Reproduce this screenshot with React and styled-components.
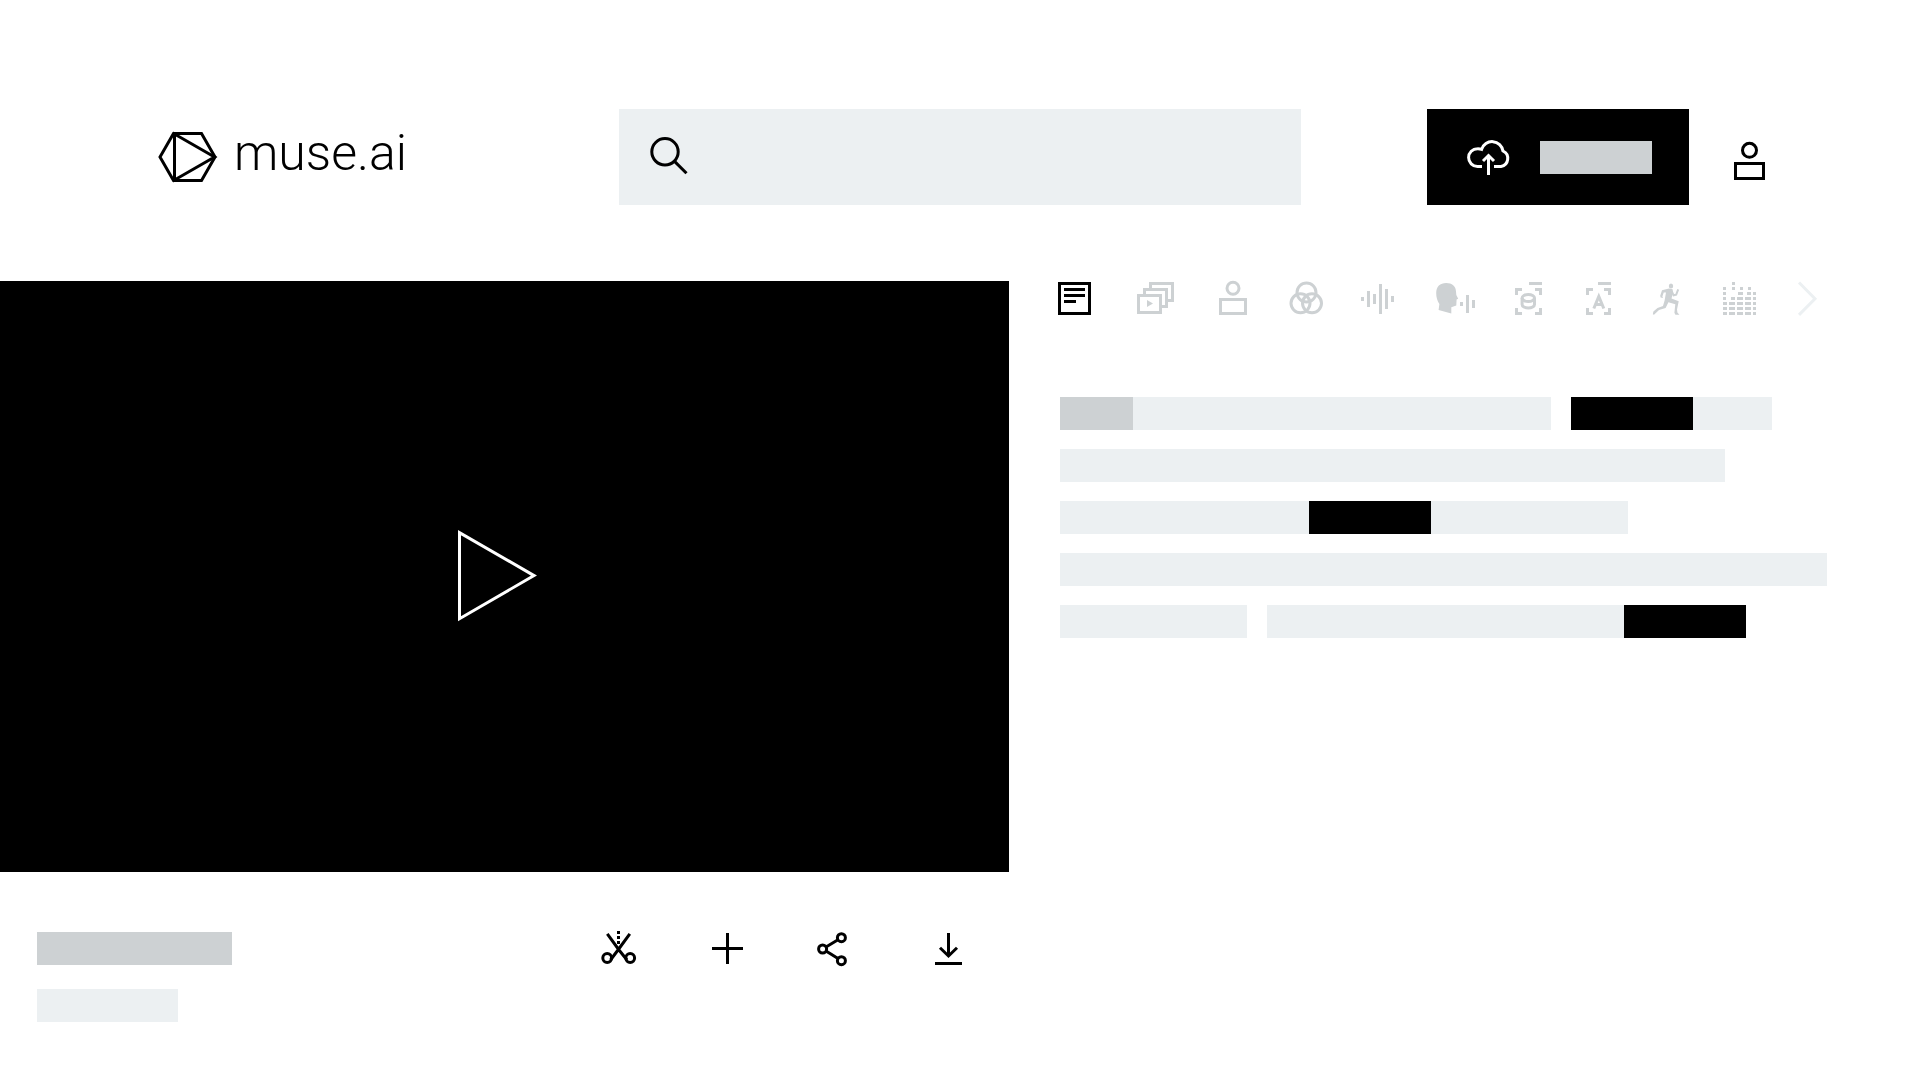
import React from "react";
import styled, { createGlobalStyle } from "styled-components";

const INK = "#000000";
const MID = "#cdd1d3";
const PALE = "#ecf0f2";

const GlobalStyle = createGlobalStyle`
  *, *::before, *::after { box-sizing: border-box; }
  body {
    margin: 0;
    background: #fff;
    color: ${INK};
    font-family: Roboto, "Liberation Sans", sans-serif;
  }
`;

const Page = styled.div`
  min-height: 100vh;
`;

const Header = styled.header`
  display: grid;
  grid-template-columns: 461fr 682fr 464fr;
  align-items: center;
  padding: 109px 155px 76px 158px;
`;

const Brand = styled.a`
  display: flex;
  align-items: center;
  gap: 16px;
  color: ${INK};
  text-decoration: none;
`;

const BrandName = styled.span`
  padding-bottom: 8px;
  font-size: 50px;
  line-height: 56px;
  font-weight: 300;
`;

const Search = styled.label`
  display: flex;
  align-items: center;
  gap: 24px;
  height: 96px;
  padding: 0 31px;
  background: ${PALE};
`;

const SearchInput = styled.input`
  flex: 1;
  min-width: 0;
  height: 48px;
  border: 0;
  padding: 0;
  outline: none;
  background: transparent;
  font: inherit;
  font-size: 24px;
`;

const Account = styled.div`
  display: flex;
  align-items: center;
  justify-content: flex-end;
  gap: 45px;
`;

const UploadButton = styled.button`
  display: flex;
  align-items: center;
  gap: 29px;
  height: 96px;
  padding: 0 37px 0 40px;
  border: 0;
  background: ${INK};
  color: #fff;
  cursor: pointer;
`;

const IconButton = styled.button`
  display: block;
  flex: none;
  padding: 0;
  border: 0;
  background: none;
  color: ${(p) => p.$color || INK};
  cursor: pointer;
`;

const Drawing = styled.svg`
  display: block;
  flex: none;
  overflow: visible;
  fill: none;
  stroke: currentColor;
  stroke-width: 3px;

  .solid {
    fill: currentColor;
    stroke: none;
  }
`;

const Bar = styled.span`
  display: block;
  flex: 0 1 auto;
  width: ${(p) => p.$width}px;
  height: 33px;
  background: ${(p) => p.$tone};
`;

const Main = styled.main`
  display: grid;
  grid-template-columns: 1009fr 911fr;
  align-items: start;
`;

const Player = styled.div`
  display: flex;
  align-items: center;
  justify-content: center;
  aspect-ratio: 1009 / 591;
  background: ${INK};
`;

const Details = styled.div`
  display: flex;
  align-items: flex-start;
  justify-content: space-between;
  padding: 60px 34px 56px 37px;
`;

const Caption = styled.div`
  display: flex;
  flex-direction: column;
  gap: 24px;
`;

const Actions = styled.div`
  display: flex;
  gap: 74px;
`;

const Insights = styled.section`
  padding-left: 49px;
`;

const Tabs = styled.nav`
  display: flex;
  justify-content: space-between;
  padding-right: 103px;
`;

const Transcript = styled.div`
  display: flex;
  flex-direction: column;
  gap: 19px;
  padding: 81px 32px 0 2px;
`;

const Line = styled.div`
  display: flex;
  gap: 20px;
`;

const Phrase = styled.div`
  display: flex;
  flex: 0 1 auto;
`;

const Icon = ({ width, height, top = 0, children }) => (
  <Drawing
    width={width}
    height={height}
    viewBox={`0 ${top} ${width} ${height}`}
    aria-hidden="true"
  >
    {children}
  </Drawing>
);

/* Each bar is [x, y, width, height]. */
const Blocks = ({ items }) =>
  items.map(([x, y, w, h]) => (
    <rect key={`${x}-${y}`} className="solid" x={x} y={y} width={w} height={h} />
  ));

const EQ_BLOCKS = [
  [11, 2, 3, 3],
  [2, 7, 3, 3], [11, 7, 3, 3], [19, 7, 3, 3], [27, 7, 3, 3],
  [2, 12, 3, 3], [17, 12, 5, 3], [26, 12, 4, 3], [32, 12, 3, 3],
  [2, 17, 3, 3], [10, 17, 4, 3], [16, 17, 6, 3], [24, 17, 6, 3], [32, 17, 3, 3],
  ...[22, 27, 32].flatMap((y) => [
    [2, y, 4, 3], [8, y, 6, 3], [16, y, 6, 3], [24, y, 6, 3], [32, y, 3, 3],
  ]),
];

const TABS = [
  {
    name: "Transcript", width: 40, color: INK,
    art: (
      <>
        <rect x="1.5" y="3.5" width="30" height="30" />
        <path d="M6 9.5H27M6 15.5H27M6 21.5H18" />
      </>
    ),
  },
  {
    name: "Scenes", width: 44,
    art: (
      <>
        <rect x="2.5" y="15.5" width="22" height="17" />
        <path d="M8.5 14V9.5H30.5V26.5H26M14.5 8V3.5H36.5V20.5H32" />
        <path className="solid" d="M11 20L17 23.5L11 27Z" />
      </>
    ),
  },
  {
    name: "People", width: 33,
    art: (
      <>
        <circle cx="15" cy="8.3" r="6" />
        <rect x="2.5" y="19.5" width="25" height="14" />
      </>
    ),
  },
  {
    name: "Topics", width: 34,
    art: (
      <>
        <circle cx="17.5" cy="12.5" r="9.5" />
        <circle cx="11.5" cy="23.3" r="9.5" />
        <circle cx="23" cy="23.3" r="9.5" />
      </>
    ),
  },
  {
    name: "Sounds", width: 36,
    art: (
      <Blocks
        items={[
          [0, 17, 3, 4], [6, 11, 3, 16], [12, 14, 3, 10],
          [18, 4, 3, 30], [24, 9, 3, 20], [30, 16, 3, 6],
        ]}
      />
    ),
  },
  {
    name: "Speakers", width: 42,
    art: (
      <>
        <path
          className="solid"
          d="M3.6 30L4.4 24C2.4 21 1.2 17.5 1.2 13C1.2 6.5 5 3 11.2 3C17 3 20.8 6 21 11.5L21.3 15L23.2 18.7L21.6 19.6L21.3 25.5L16.3 27.3V33.6Z"
        />
        <Blocks items={[[25, 22, 3, 4], [31, 15, 3, 18], [37, 20, 3, 8]]} />
      </>
    ),
  },
  {
    name: "Objects", width: 30,
    art: (
      <>
        <path d="M1.5 15V9.5H7M20 9.5H25.5V15M1.5 28V33.5H7M20 33.5H25.5V28M14 3.5H27" />
        <ellipse cx="13.3" cy="18" rx="6.2" ry="3.6" />
        <path d="M7.1 18V24.5C7.1 26.5 9.9 28 13.3 28S19.5 26.5 19.5 24.5V18" />
      </>
    ),
  },
  {
    name: "On-screen text", width: 30,
    art: (
      <>
        <path d="M4.5 15V9.5H10M21 9.5H26.5V15M4.5 28V33.5H10M21 33.5H26.5V28M15 3.5H28" />
        <path d="M10.8 28.5L15.8 16.5L20.8 28.5M12 24.5H19.5" />
      </>
    ),
  },
  {
    name: "Actions", width: 32,
    art: (
      <>
        <ellipse className="solid" cx="20" cy="6" rx="2.2" ry="2.5" />
        <path
          className="solid"
          d="M18 8.5L21.6 9.2L22 12.5L20.5 18.5L27.7 21.3L26 29.5L26.4 32.5L28.4 34.8H24.4L23.4 32.8L24.3 24.2L17.4 22.2L14.6 28L8 30L3 34.7L1.8 34.3L2.4 31.5L6.5 28L12 26L13.6 20.5L15 12.5L12.7 12.6L11.4 16.6L12 18L9.6 17.6L9.2 15.8L11 10.2Z"
        />
        <path strokeWidth="2" d="M20.6 11L22.6 15.3L25.2 14.6L27.2 9.3" />
      </>
    ),
  },
  { name: "Activity", width: 38, art: <Blocks items={EQ_BLOCKS} /> },
  {
    name: "More", width: 20, color: PALE,
    art: <path d="M2 2.5L18 18.7L2 34.9" />,
  },
];

const ACTIONS = [
  {
    name: "Clip", width: 37,
    art: (
      <>
        <circle cx="7.2" cy="28" r="4.4" />
        <circle cx="30.2" cy="28" r="4.4" />
        <path d="M7.3 3.8L19 20L27 30M29.8 3.8L18 20L10.5 30" />
        <Blocks items={[[17, 1, 3, 3], [17, 6, 3, 3], [17, 11, 3, 3]]} />
      </>
    ),
  },
  { name: "Add", width: 32, art: <path d="M1 18.5H32M16.5 3V34" /> },
  {
    name: "Share", width: 30,
    art: (
      <>
        <circle cx="24.4" cy="7.7" r="4" />
        <circle cx="5.6" cy="19" r="4" />
        <circle cx="24.4" cy="30.7" r="4" />
        <path d="M9 17L21 9.8M9 21L21 28.6" />
      </>
    ),
  },
  {
    name: "Download", width: 54,
    art: <path d="M27.5 3V26M19 17.7L27.5 26L36 17.7M14 33.5H41" />,
  },
];

/* Lines of the transcript: phrases made of [width, tone] runs. */
const LINES = [
  [[[73, MID], [418, PALE]], [[122, INK], [79, PALE]]],
  [[[665, PALE]]],
  [[[249, PALE], [122, INK], [197, PALE]]],
  [[[767, PALE]]],
  [[[187, PALE]], [[357, PALE], [122, INK]]],
];

export default function App() {
  return (
    <Page>
      <GlobalStyle />
      <Header>
        <Brand href="#home">
          <Icon width={60} height={51}>
            <path d="M15.5 1.5H43.5L57 25L43.5 48.5H15.5L2 25Z" />
            <path d="M16.5 2V48L56.5 25Z" />
          </Icon>
          <BrandName>muse.ai</BrandName>
        </Brand>
        <Search>
          <Icon width={38} height={42}>
            <circle cx="15" cy="15.8" r="13.2" />
            <path d="M24.3 25.1L36.5 37.3" />
          </Icon>
          <SearchInput type="search" aria-label="Search" />
        </Search>
        <Account>
          <UploadButton type="button" aria-label="Upload">
            <Icon width={44} height={38}>
              <path d="M15 28.5H10.5A8.9 8.9 0 0 1 10.5 10.7Q12.5 10.6 14.6 11.4A11 11 0 0 1 36 13A8.2 8.2 0 0 1 34 28.5H27" />
              <path d="M21.5 37V17.5M16 23L21.5 17.5L27 23" />
            </Icon>
            <Bar $width={112} $tone={MID} />
          </UploadButton>
          <IconButton type="button" aria-label="Account">
            <Icon width={31} height={46}>
              <circle cx="15.5" cy="16.3" r="7" />
              <rect x="1.5" y="29.5" width="28" height="15" />
            </Icon>
          </IconButton>
        </Account>
      </Header>
      <Main>
        <section>
          <Player>
            <IconButton type="button" aria-label="Play" $color="#fff">
              <Icon width={93} height={93}>
                <path d="M1.5 2.6V88.7L76 45.6Z" />
              </Icon>
            </IconButton>
          </Player>
          <Details>
            <Caption>
              <Bar $width={195} $tone={MID} />
              <Bar $width={141} $tone={PALE} />
            </Caption>
            <Actions>
              {ACTIONS.map((a) => (
                <IconButton key={a.name} type="button" aria-label={a.name}>
                  <Icon width={a.width} height={34} top={2}>{a.art}</Icon>
                </IconButton>
              ))}
            </Actions>
          </Details>
        </section>
        <Insights>
          <Tabs>
            {TABS.map((t) => (
              <IconButton key={t.name} type="button" aria-label={t.name} $color={t.color || MID}>
                <Icon width={t.width} height={35} top={1}>{t.art}</Icon>
              </IconButton>
            ))}
          </Tabs>
          <Transcript>
            {LINES.map((phrases, i) => (
              <Line key={i}>
                {phrases.map((runs, j) => (
                  <Phrase key={j}>
                    {runs.map(([width, tone], k) => (
                      <Bar key={k} $width={width} $tone={tone} />
                    ))}
                  </Phrase>
                ))}
              </Line>
            ))}
          </Transcript>
        </Insights>
      </Main>
    </Page>
  );
}
